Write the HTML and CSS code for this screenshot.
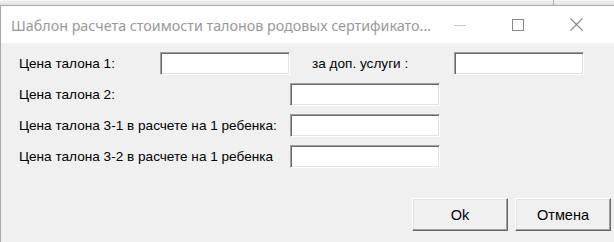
FILE: index.html
```html
<!DOCTYPE html>
<html lang="ru">
<head>
<meta charset="utf-8">
<title>Шаблон</title>
<link rel="stylesheet" href="styles.css">
</head>
<body>
<div class="desk">
  <div class="desk-split"></div>
</div>
<div class="window">
  <div class="titlebar">
    <div class="title">Шаблон расчета стоимости талонов родовых сертификато...</div>
    <div class="caption-btns">
      <div class="cbtn"><svg width="12" height="12" viewBox="0 0 12 12"><line x1="0" y1="6.5" x2="12" y2="6.5" stroke="#c8c8c8" stroke-width="1"/></svg></div>
      <div class="cbtn"><svg width="12" height="12" viewBox="0 0 12 12"><rect x="0.5" y="0.5" width="11" height="11" fill="none" stroke="#8a8a8a" stroke-width="1"/></svg></div>
      <div class="cbtn"><svg width="13" height="13" viewBox="0 0 13 13"><path d="M0.5 0.5 L12.5 12.5 M12.5 0.5 L0.5 12.5" stroke="#8a8a8a" stroke-width="1.1" fill="none"/></svg></div>
    </div>
  </div>
  <div class="client">
    <div class="row">
      <span class="lbl lbl-first">Цена талона 1:</span>
      <span class="field field-sm"></span>
      <span class="lbl lbl-extra">за доп. услуги :</span>
      <span class="field field-sm"></span>
    </div>
    <div class="row">
      <span class="lbl lbl-wide">Цена талона 2:</span>
      <span class="field field-lg"></span>
    </div>
    <div class="row">
      <span class="lbl lbl-wide">Цена талона 3-1 в расчете на 1 ребенка:</span>
      <span class="field field-lg"></span>
    </div>
    <div class="row">
      <span class="lbl lbl-wide">Цена талона 3-2 в расчете на 1 ребенка</span>
      <span class="field field-lg"></span>
    </div>
    <div class="buttons">
      <div class="btn">Ok</div>
      <div class="btn">Отмена</div>
    </div>
  </div>
</div>
</body>
</html>
```

FILE: styles.css
```css
html, body {
  margin: 0;
  padding: 0;
  width: 614px;
  height: 242px;
  overflow: hidden;
  background: #f0f0f0;
}
.desk {
  height: 5px;
  background: linear-gradient(#f2f2f2, #e2e2e2);
  border-bottom: 1px solid #a8a8a8;
  position: relative;
}
.desk-split {
  position: absolute;
  left: 553px;
  top: 0;
  width: 1px;
  height: 5px;
  background: #b4b4b4;
}
.window {
  border-left: 1px solid #a8a8a8;
  height: 236px;
  background: #f0f0f0;
}
.titlebar {
  height: 37px;
  background: #ffffff;
  display: flex;
  align-items: center;
}
.title {
  font-family: "Noto Sans", "Open Sans", sans-serif;
  font-size: 14.3px;
  color: #999999;
  padding-left: 10px;
  flex: 1;
  white-space: nowrap;
  padding-top: 1px;
}
.caption-btns {
  display: flex;
  align-items: center;
  padding-right: 16px;
}
.cbtn {
  width: 58px;
  display: flex;
  justify-content: center;
  align-items: center;
  height: 37px;
}
.client {
  padding: 9px 3px 0 18px;
  font-family: "Liberation Sans", Arial, sans-serif;
  font-size: 13.6px;
  color: #000;
}
.row {
  display: flex;
  align-items: center;
  height: 23px;
  margin-bottom: 8px;
}
.lbl {
  white-space: nowrap;
  flex: none;
}
.lbl-first { width: 141px; }
.lbl-extra { width: 142px; margin-left: 22px; }
.lbl-wide { width: 271px; }
.field {
  flex: none;
  height: 23px;
  box-sizing: border-box;
  background: #fff;
  border-top: 1px solid #a0a0a0;
  border-left: 1px solid #a0a0a0;
  border-right: 1px solid #ffffff;
  border-bottom: 1px solid #ffffff;
  box-shadow: inset 1px 1px 0 #696969, inset -1px -1px 0 #e3e3e3;
}
.field-sm { width: 130px; }
.field-lg { width: 150px; }
.buttons {
  display: flex;
  justify-content: flex-end;
  gap: 7px;
  margin-top: 30px;
}
.btn {
  width: 96px;
  height: 33px;
  box-sizing: border-box;
  display: flex;
  align-items: center;
  justify-content: center;
  background: #f0f0f0;
  border-top: 1px solid #ffffff;
  border-left: 1px solid #ffffff;
  border-right: 1px solid #696969;
  border-bottom: 1px solid #696969;
  box-shadow: inset -1px -1px 0 #a0a0a0, inset 1px 1px 0 #e3e3e3;
  font-size: 14.5px;
}
```
